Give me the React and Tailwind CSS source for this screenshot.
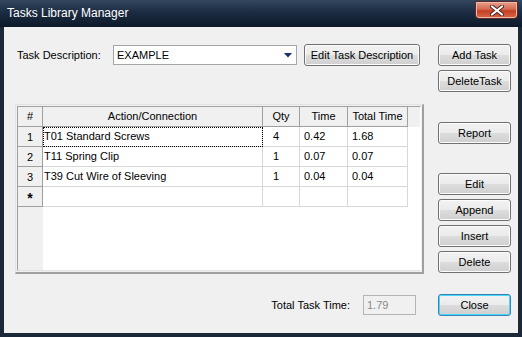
import React from "react";

const font = { fontFamily: '"Liberation Sans", Arial, sans-serif' };

function Button({ label, className = "", primary = false }) {
  return (
    <button
      className={
        "h-[22px] w-full rounded-[3px] border text-[11px] text-black leading-none bg-[linear-gradient(to_bottom,#f2f2f2_0%,#ebebeb_50%,#dddddd_50%,#cfcfcf_100%)] " +
        (primary
          ? "border-[#3c7fb1] shadow-[inset_0_0_0_1px_#48d8fb] "
          : "border-[#707070] shadow-[inset_0_0_0_1px_#fcfcfc] ") +
        className
      }
    >
      {label}
    </button>
  );
}

const rows = [
  { n: "1", action: "T01 Standard Screws", qty: "4", time: "0.42", total: "1.68", focus: true },
  { n: "2", action: "T11 Spring Clip", qty: "1", time: "0.07", total: "0.07" },
  { n: "3", action: "T39 Cut Wire of Sleeving", qty: "1", time: "0.04", total: "0.04" },
  { n: "*", action: "", qty: "", time: "", total: "" },
];

function TaskGrid() {
  return (
    <div className="mt-[38px] h-[170px] w-[409px] border-t border-l border-r-2 border-b-2 border-t-[#e3e3e3] border-l-[#e3e3e3] border-r-[#a0a0a0] border-b-[#a0a0a0] p-px">
      <div className="flex h-full flex-col border border-t-[#a0a0a0] border-l-[#a0a0a0] border-r-white border-b-[#e3e3e3] bg-white">
        {/* Header */}
        <div className="flex h-[20px] bg-[#f0f0f0] text-[11px]">
          <div className="flex w-[25px] items-center justify-center border-r border-b border-[#a0a0a0]">#</div>
          <div className="flex w-[220px] items-center justify-center border-r border-b border-[#a0a0a0]">Action/Connection</div>
          <div className="flex w-[37px] items-center justify-center border-r border-b border-[#a0a0a0]">Qty</div>
          <div className="flex w-[48px] items-center justify-center border-r border-b border-[#a0a0a0]">Time</div>
          <div className="flex w-[60px] items-center justify-center border-r border-b border-[#a0a0a0]">Total Time</div>
          <div className="flex-1" />
        </div>

        {/* Rows */}
        {rows.map((r) => (
          <div key={r.n} className="flex h-[20px] text-[11px]">
            <div
              className={
                "flex w-[25px] items-center justify-center border-r border-b border-[#a0a0a0] bg-[#f0f0f0] " +
                (r.n === "*" ? "pt-[3px] text-[14px] font-bold" : "pt-[2px]")
              }
            >
              {r.n}
            </div>
            <div
              className={
                "flex w-[220px] items-center border-r border-b border-[#d8d8d8] pl-[1px] " +
                (r.focus ? "outline outline-1 outline-dotted outline-black outline-offset-[-1px]" : "")
              }
            >
              {r.action}
            </div>
            <div className="flex w-[37px] items-center border-r border-b border-[#d8d8d8] pl-[10px]">{r.qty}</div>
            <div className="flex w-[48px] items-center border-r border-b border-[#d8d8d8] pl-[4px]">{r.time}</div>
            <div className="flex w-[60px] items-center border-r border-b border-[#d8d8d8] pl-[4px]">{r.total}</div>
            <div className="flex-1" />
          </div>
        ))}

        {/* Empty area */}
        <div className="flex flex-1">
          <div className="w-[25px] bg-[#f0f0f0]" />
          <div className="flex-1" />
        </div>
      </div>
    </div>
  );
}

export default function App() {
  return (
    <div className="flex h-[337px] w-[522px] flex-col bg-[#1b2838]" style={font}>
      {/* Title bar */}
      <div className="flex h-[27px] justify-between bg-[linear-gradient(to_bottom,#33475f_0%,#1c2c42_45%,#0d192a_100%)]">
        <span className="pl-[7px] pt-[6px] text-[12px] leading-[14px] text-white">Tasks Library Manager</span>
        <div className="mr-[4px] mt-px flex h-[18px] w-[43px] items-center justify-center rounded-b-[4px] border border-[#5b2a24] bg-[linear-gradient(to_bottom,#e8a08c_0%,#d56a50_45%,#c33f22_55%,#d8684a_100%)] shadow-[inset_0_0_0_1px_#f0b8a8]">
          <svg width="14" height="11" viewBox="0 0 14 11">
            <path d="M2 1.5 L12 9.5 M12 1.5 L2 9.5" stroke="#4a2620" strokeWidth="4" strokeLinecap="round" />
            <path d="M2 1.5 L12 9.5 M12 1.5 L2 9.5" stroke="#ffffff" strokeWidth="2.2" strokeLinecap="round" />
          </svg>
        </div>
      </div>

      {/* Body */}
      <div className="mx-[4px] mb-[4px] flex flex-1 gap-[14px] bg-[#f0f0f0] pl-[11px] pt-[17px] text-black">
        {/* Left side */}
        <div className="flex w-[409px] flex-col">
          <div className="flex h-[22px] items-center text-[11px]">
            <span className="w-[98px] pl-[2px]">Task Description:</span>
            <div className="flex h-[20px] w-[184px] items-center justify-between border border-[#a3a6ab] bg-white pl-[3px] pr-[4px]">
              <span>EXAMPLE</span>
              <svg width="8" height="5" viewBox="0 0 8 5">
                <path d="M0 0 H8 L4 4.5 Z" fill="#1e2d6b" />
              </svg>
            </div>
            <div className="ml-[7px] w-[116px]">
              <Button label="Edit Task Description" />
            </div>
          </div>

          <TaskGrid />

          <div className="mt-[21px] flex h-[20px] items-center justify-end pr-[8px] text-[11px]">
            <span className="mr-[13px]">Total Task Time:</span>
            <div className="flex h-[20px] w-[53px] items-center border border-[#b5b5b5] bg-[#f0f0f0] pl-[3px] text-[#8a8a8a]">
              1.79
            </div>
          </div>
        </div>

        {/* Right side buttons */}
        <div className="flex w-[73px] flex-col">
          <Button label="Add Task" />
          <Button label="DeleteTask" className="mt-[4px]" />
          <Button label="Report" className="mt-[30px]" />
          <Button label="Edit" className="mt-[29px]" />
          <Button label="Append" className="mt-[4px]" />
          <Button label="Insert" className="mt-[4px]" />
          <Button label="Delete" className="mt-[4px]" />
          <Button label="Close" primary className="mt-[21px]" />
        </div>
      </div>
    </div>
  );
}
